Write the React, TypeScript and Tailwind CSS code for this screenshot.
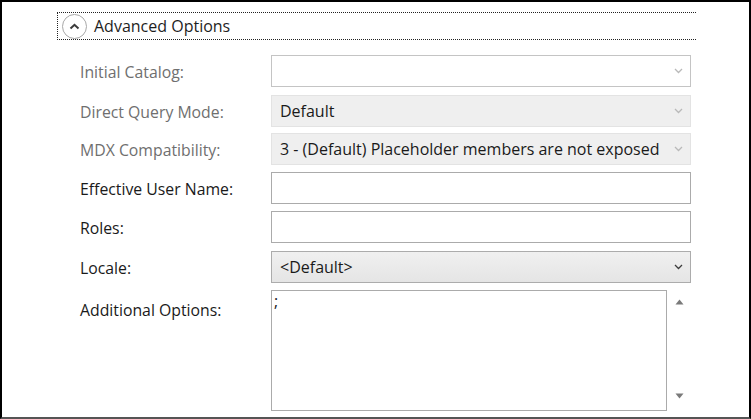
import React from "react";

const font = { fontFamily: '"Open Sans", "Noto Sans", sans-serif' };

const Chevron = ({ dark }: { dark?: boolean }) => (
  <svg width="9" height="6" viewBox="0 0 9 6" className="shrink-0">
    <path
      d="M1 1 L4.5 4.5 L8 1"
      fill="none"
      stroke={dark ? "#3c3c3c" : "#b9b9b9"}
      strokeWidth="1.3"
    />
  </svg>
);

type Row = {
  label: string;
  disabled?: boolean;
  kind: "combo" | "text" | "locale";
  value?: string;
  gap: string;
};

const rows: Row[] = [
  { label: "Initial Catalog:", disabled: true, kind: "combo", value: "", gap: "mt-0" },
  { label: "Direct Query Mode:", disabled: true, kind: "combo", value: "Default", gap: "mt-[8px]" },
  {
    label: "MDX Compatibility:",
    disabled: true,
    kind: "combo",
    value: "3 - (Default) Placeholder members are not exposed",
    gap: "mt-[6px]",
  },
  { label: "Effective User Name:", kind: "text", gap: "mt-[7px]" },
  { label: "Roles:", kind: "text", gap: "mt-[7px]" },
  { label: "Locale:", kind: "locale", value: "<Default>", gap: "mt-[8px]" },
];

const Field = ({ row, first }: { row: Row; first: boolean }) => {
  if (row.kind === "text") {
    return <div className="h-8 w-[420px] border border-[#ababab] bg-white" />;
  }
  if (row.kind === "locale") {
    return (
      <div className="flex h-8 w-[420px] items-center justify-between border border-[#acacac] bg-gradient-to-b from-[#f0f0f0] to-[#e5e5e5] pl-2 pr-[7px] text-[16px] text-[#1a1a1a]">
        <span>{row.value}</span>
        <Chevron dark />
      </div>
    );
  }
  return (
    <div
      className={`flex h-8 w-[420px] items-center justify-between pl-2 pr-[7px] text-[16px] text-[#1a1a1a] ${
        first ? "border border-[#c4c4c4] bg-white" : "border border-[#e3e3e3] bg-[#efefef]"
      }`}
    >
      <span>{row.value}</span>
      <Chevron />
    </div>
  );
};

export default function App() {
  return (
    <div
      className="relative h-[419px] w-[751px] overflow-hidden border-l-2 border-r-2 border-t-2 border-b-2 border-l-black border-r-black border-t-black border-b-[#555] bg-white"
      style={font}
    >
      <div className="ml-[55px] mt-[10px] flex h-[28px] w-[639px] items-center border-b border-l border-t border-dotted border-[#222]">
        <div className="ml-[4px] flex h-[25px] w-[25px] items-center justify-center rounded-full border border-[#a8a8a8]">
          <svg width="11" height="7" viewBox="0 0 11 7">
            <path d="M1.5 5.5 L5.5 1.8 L9.5 5.5" fill="none" stroke="#3a3a3a" strokeWidth="2" />
          </svg>
        </div>
        <span className="ml-[7px] text-[16px] leading-none text-[#1e1e1e]">Advanced Options</span>
      </div>

      <div className="ml-[78px] mt-[15px] flex flex-col">
        {rows.map((r, i) => (
          <div key={r.label} className={`flex items-center ${r.gap}`}>
            <div
              className={`w-[191px] pt-[4px] text-[15.8px] ${r.disabled ? "text-[#6f6f6f]" : "text-[#1a1a1a]"}`}
            >
              {r.label}
            </div>
            <Field row={r} first={i === 0} />
          </div>
        ))}

        <div className="mt-[7px] flex items-start">
          <div className="w-[191px] pt-[9px] text-[15.8px] text-[#1a1a1a]">Additional Options:</div>
          <div className="h-[121px] w-[396px] border border-[#ababab] bg-white px-[2px] text-[16px] leading-5 text-[#1a1a1a]">
            ;
          </div>
          <div className="ml-[5px] flex h-[121px] w-[14px] flex-col items-center justify-between pb-[12px] pt-[9px]">
            <svg width="9" height="6" viewBox="0 0 9 6">
              <path d="M0.5 5.5 L4.5 0.5 L8.5 5.5 Z" fill="#7a7a7a" />
            </svg>
            <svg width="9" height="6" viewBox="0 0 9 6">
              <path d="M0.5 0.5 L4.5 5.5 L8.5 0.5 Z" fill="#7a7a7a" />
            </svg>
          </div>
        </div>
      </div>
    </div>
  );
}
